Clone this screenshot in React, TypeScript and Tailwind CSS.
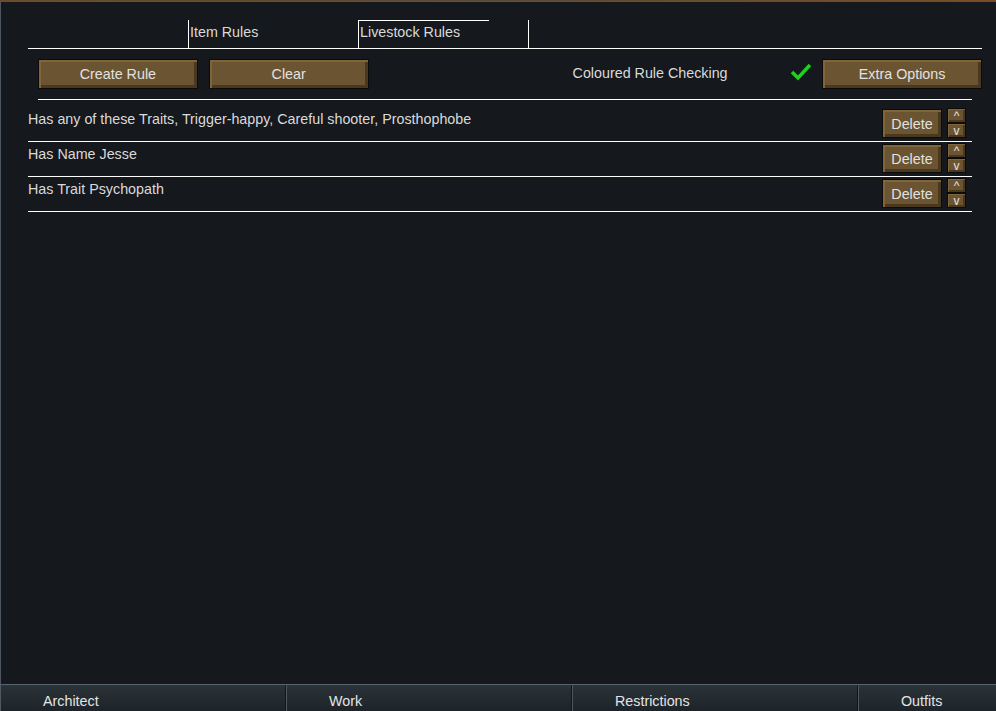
import { Fragment } from "react";

const rules = [
  "Has any of these Traits, Trigger-happy, Careful shooter, Prosthophobe",
  "Has Name Jesse",
  "Has Trait Psychopath",
];

const bottomTabs = ["Architect", "Work", "Restrictions", "Outfits"];

function GameButton({ label, className }: { label: string; className: string }) {
  return (
    <button
      className={
        "flex items-center justify-center border border-[#0b0b0b] bg-[#6b5431] text-[#e2e2e2] shadow-[inset_2px_2px_0_#7f6539,inset_-3px_-3px_0_#4a391f] " +
        className
      }
    >
      {label}
    </button>
  );
}

function ArrowButton({ glyph }: { glyph: string }) {
  return (
    <button className="flex h-[15px] w-[19px] items-center justify-center border border-[#0b0b0b] bg-[#6b5431] pt-[1px] text-[12px] leading-none text-[#e2e2e2] shadow-[inset_1px_1px_0_#7f6539,inset_-2px_-2px_0_#4a391f]">
      {glyph}
    </button>
  );
}

export default function App() {
  return (
    <div className="flex h-[711px] w-[996px] flex-col overflow-hidden bg-[#15181d] font-['Liberation_Sans',Arial,sans-serif] text-[14.3px] leading-[16px] text-[#dadada]">
      {/* game backdrop peeking at the top */}
      <div className="h-px bg-gradient-to-r from-[#6b4a2a] via-[#5a4a30] to-[#7a4d28]" />

      <div className="flex flex-1 flex-col border-l border-t border-[#4d5660]">
        {/* Tabs */}
        <div className="ml-[27px] mr-[14px] mt-[18px] flex border-b border-white">
          <div className="w-[160px]" />
          <div className="h-[28px] w-[170px] border-l border-white pl-px pt-[4px]">Item Rules</div>
          <div className="flex h-[28px] w-[170px] flex-col border-l border-white">
            <div className="h-px w-[130px] bg-white" />
            <div className="pl-px pt-[3px]">Livestock Rules</div>
          </div>
          <div className="h-[28px] border-l border-white" />
        </div>

        {/* Toolbar */}
        <div className="ml-[37px] mr-[14px] mt-[10px] flex h-[30px] items-center">
          <GameButton label="Create Rule" className="h-[30px] w-[160px]" />
          <GameButton label="Clear" className="ml-[11px] h-[30px] w-[160px]" />
          <span className="ml-[204px] w-[218px] pb-[2px]">Coloured Rule Checking</span>
          <svg className="mb-[4px]" width="22" height="20" viewBox="0 0 22 20">
            <polyline
              points="2,10 8,16 20,3"
              fill="none"
              stroke="#1fd11f"
              strokeWidth="3.5"
              strokeLinejoin="miter"
            />
          </svg>
          <GameButton label="Extra Options" className="ml-[10px] h-[30px] w-[160px]" />
        </div>
        <div className="ml-[37px] mr-[24px] mt-[10px] h-px bg-white" />

        {/* Rules */}
        <div className="ml-[27px] mr-[24px] mt-[7px] flex flex-col">
          {rules.map((rule) => (
            <Fragment key={rule}>
              <div className="flex h-[34px] items-start">
                <div className="flex-1 pt-[4px]">{rule}</div>
                <GameButton label="Delete" className="mt-[2px] h-[29px] w-[60px]" />
                <div className="ml-[5px] mr-[6px] mt-px flex flex-col">
                  <ArrowButton glyph="^" />
                  <ArrowButton glyph="v" />
                </div>
              </div>
              <div className="h-px bg-white" />
            </Fragment>
          ))}
        </div>
      </div>

      {/* Bottom main tabs */}
      <div className="flex h-[27px] border-t border-[#59636c]">
        {bottomTabs.map((tab, i) => (
          <div
            key={tab}
            className={
              "flex h-full items-center border-l border-[#4f5961] bg-gradient-to-b from-[#2a3339] to-[#1d2429] pl-[42px] pt-[6px] text-[#e4e4e4] " +
              (i === 3 ? "flex-1" : "w-[286px] border-r border-r-[#10151a]")
            }
          >
            {tab}
          </div>
        ))}
      </div>
    </div>
  );
}
